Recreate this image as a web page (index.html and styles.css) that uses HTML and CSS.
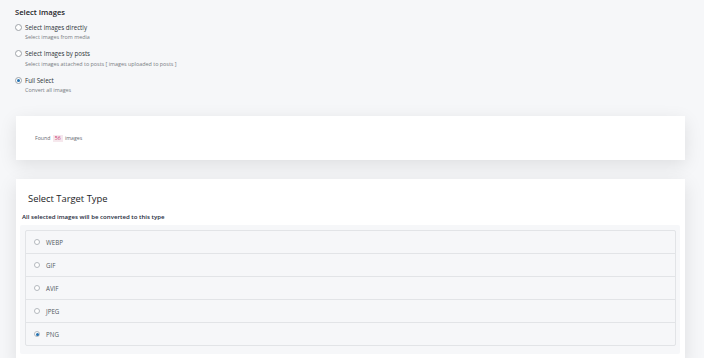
FILE: index.html
```html
<!DOCTYPE html>
<html lang="en">
<head>
  <meta charset="UTF-8">
  <meta name="viewport" content="width=device-width, initial-scale=1.0">
  <title>Image Converter</title>
  <link rel="stylesheet" href="styles.css">
</head>
<body>
  <div class="page">
    <div class="select-images">
      <h3>Select Images</h3>
      <div class="option">
        <label><input type="radio" name="source" value="direct"> Select images directly</label>
        <p class="desc">Select images from media</p>
      </div>
      <div class="option">
        <label><input type="radio" name="source" value="posts"> Select Images by posts</label>
        <p class="desc">Select images attached to posts [ images uploaded to posts ]</p>
      </div>
      <div class="option">
        <label><input type="radio" name="source" value="all" checked> Full Select</label>
        <p class="desc">Convert all images</p>
      </div>
    </div>

    <div class="card found-card">
      <p>Found <span class="count">56</span> images</p>
    </div>

    <div class="card target-card">
      <h2>Select Target Type</h2>
      <p class="hint">All selected images will be converted to this type</p>
      <div class="type-list">
        <ul>
          <li><label><input type="radio" name="target" value="webp"> WEBP</label></li>
          <li><label><input type="radio" name="target" value="gif"> GIF</label></li>
          <li><label><input type="radio" name="target" value="avif"> AVIF</label></li>
          <li><label><input type="radio" name="target" value="jpeg"> JPEG</label></li>
          <li><label><input type="radio" name="target" value="png" checked> PNG</label></li>
        </ul>
      </div>
    </div>
  </div>
</body>
</html>
```

FILE: styles.css
```css
body {
  margin: 0;
  background: #f6f7f9;
  font-family: "Open Sans", Arial, sans-serif;
  color: #2c3338;
  overflow: hidden;
}

.page {
  padding: 0 19px 0 16px;
}

p {
  margin: 0;
}

input[type="radio"] {
  appearance: none;
  -webkit-appearance: none;
  margin: 0;
  border: 1px solid #9ea3a8;
  border-radius: 50%;
  background: #fff;
  display: inline-grid;
  place-content: center;
  flex-shrink: 0;
}

input[type="radio"]:checked::before {
  content: "";
  width: 3px;
  height: 3px;
  border-radius: 50%;
  background: #2271b1;
}

.select-images {
  margin-left: -1px;
  padding-top: 6px;
}

.select-images h3 {
  margin: 0 0 4px;
  font-size: 7.6px;
  line-height: 12px;
  font-weight: 600;
  color: #1d2327;
}

.option {
  margin-bottom: 6.5px;
}

.option label {
  display: flex;
  align-items: center;
  gap: 3px;
  height: 10px;
  font-size: 6.2px;
  color: #2c3338;
}

.option input[type="radio"] {
  width: 7px;
  height: 7px;
}

.option .desc {
  margin-left: 10px;
  font-size: 5.4px;
  line-height: 10px;
  color: #787c82;
}

.card {
  background: #fff;
  box-shadow: 0 5px 18px rgba(0, 0, 0, 0.1);
}

.found-card {
  margin-top: 21px;
  height: 44px;
  display: flex;
  align-items: center;
  padding-left: 19px;
  font-size: 5.2px;
  color: #646970;
}

.count {
  display: inline-block;
  padding: 0 2px;
  margin: 0 1px;
  background: #f6e8ed;
  color: #c7326c;
  line-height: 7px;
}

.target-card {
  margin-top: 19px;
  padding: 12px 5px 10px 4px;
}

.target-card h2 {
  margin: 0 0 5px 8px;
  font-size: 9.4px;
  line-height: 16px;
  font-weight: 500;
  color: #1d2327;
}

.hint {
  margin-left: 2px;
  font-size: 6.1px;
  line-height: 10px;
  font-weight: 600;
  color: #1d2a3a;
}

.type-list {
  margin-top: 3px;
  padding: 5px 4px 8px 5px;
  background: #f6f7f9;
  border-radius: 2px;
}

.type-list ul {
  margin: 0;
  padding: 0;
  list-style: none;
  border: 1px solid #e2e4e7;
  border-radius: 2px;
}

.type-list li {
  height: 22px;
  border-bottom: 1px solid #e2e4e7;
}

.type-list li:last-child {
  border-bottom: none;
}

.type-list label {
  display: flex;
  align-items: center;
  gap: 6px;
  height: 100%;
  padding-left: 8px;
  font-size: 6.2px;
  color: #50575e;
}

.type-list input[type="radio"] {
  width: 6px;
  height: 6px;
  border-color: #b4b9be;
}
```
